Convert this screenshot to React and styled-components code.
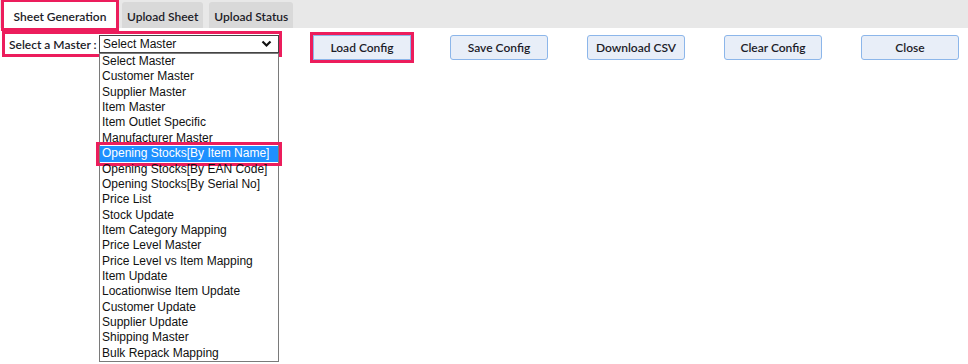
import React from 'react'
import styled, { createGlobalStyle } from 'styled-components';

const Global = createGlobalStyle`
  body {
    margin: 0;
    background: #fff;
    font-family: Lato, "Open Sans", sans-serif;
  }
`;

const MASTERS = [
  'Select Master',
  'Customer Master',
  'Supplier Master',
  'Item Master',
  'Item Outlet Specific',
  'Manufacturer Master',
  'Opening Stocks[By Item Name]',
  'Opening Stocks[By EAN Code]',
  'Opening Stocks[By Serial No]',
  'Price List',
  'Stock Update',
  'Item Category Mapping',
  'Price Level Master',
  'Price Level vs Item Mapping',
  'Item Update',
  'Locationwise Item Update',
  'Customer Update',
  'Supplier Update',
  'Shipping Master',
  'Bulk Repack Mapping',
];

const BUTTONS = ['Load Config', 'Save Config', 'Download CSV', 'Clear Config', 'Close'];

function App() {
  return (
    <Page>
      <Global />
      <TabBar>
        <Tab active highlight>Sheet Generation</Tab>
        <Tab>Upload Sheet</Tab>
        <Tab>Upload Status</Tab>
      </TabBar>

      <Toolbar>
        <MasterGroup>
          <Label>Select a Master :</Label>
          <Select>
            <SelectText>Select Master</SelectText>
            <svg width="11" height="8" viewBox="0 0 11 8">
              <polyline points="1.5,1.5 5.5,5.5 9.5,1.5" fill="none" stroke="#111" strokeWidth="2.2" />
            </svg>
            <List>
              {MASTERS.map((m, i) => (
                <Option key={m} selected={i === 6}>{m}</Option>
              ))}
            </List>
          </Select>
        </MasterGroup>

        <Buttons>
          {BUTTONS.map((b, i) => (
            <Button key={b} highlight={i === 0}>{b}</Button>
          ))}
        </Buttons>
      </Toolbar>
    </Page>
  )
}

const Page = styled.div`
    width:968px;
    height:364px;
    overflow:hidden;
`;

const TabBar = styled.div`
    display:flex;
    align-items:flex-end;
    gap:6px;
    height:28px;
    padding-left:4px;
    background:#e8e8e8;
`;

const Tab = styled.div`
    display:flex;
    align-items:center;
    justify-content:center;
    height:26px;
    padding:3px 5px 0;
    box-sizing:border-box;
    border-radius:${p => p.highlight ? '0' : '3px 3px 0 0'};
    background:${p => p.active ? '#fff' : '#d9d9d9'};
    color:#1c1c28;
    font-size:12px;
    font-weight:600;
    outline:${p => p.highlight ? '3px solid #ec1d5c' : 'none'};
    outline-offset:0;
    ${p => p.active && 'width:112px; padding:3px 0 0;'}
`;

const Toolbar = styled.div`
    display:flex;
    align-items:flex-start;
    padding:3px 0 0 2px;
`;

const MasterGroup = styled.div`
    display:flex;
    align-items:center;
    width:280px;
    height:26px;
    box-sizing:border-box;
    border:3px solid #ec1d5c;
    padding:1px 0 0 4px;
`;

const Label = styled.span`
    font-size:12px;
    font-weight:600;
    color:#1c1c28;
`;

const Select = styled.div`
    position:relative;
    display:flex;
    align-items:center;
    justify-content:space-between;
    width:180px;
    height:18px;
    margin-left:auto;
    margin-top:-1px;
    box-sizing:border-box;
    border:1px solid #444;
    background:#fff;
    padding:0 6px 0 3px;

    svg{
        flex:none;
    }
`;

const SelectText = styled.span`
    font-family:"Liberation Sans", Arial, sans-serif;
    font-size:12px;
    color:#111;
`;

const List = styled.div`
    position:absolute;
    top:17px;
    left:-1px;
    width:180px;
    box-sizing:border-box;
    border:1px solid #7a7a7a;
    background:#fff;
    z-index:1;
`;

const Option = styled.div`
    height:15.37px;
    line-height:15.37px;
    padding-left:2px;
    font-family:"Liberation Sans", Arial, sans-serif;
    font-size:12px;
    white-space:nowrap;
    color:${p => p.selected ? '#fff' : '#111'};
    background:${p => p.selected ? '#1e90ff' : 'transparent'};
    outline:${p => p.selected ? '3px solid #ec1d5c' : 'none'};
    outline-offset:1px;
    position:relative;
`;

const Buttons = styled.div`
    display:flex;
    gap:39px;
    margin-left:31px;
    margin-top:4px;
`;

const Button = styled.button`
    width:98px;
    height:25px;
    box-sizing:border-box;
    border:1px solid #8cb6ea;
    border-radius:${p => p.highlight ? '0' : '3px'};
    background:#e8eef8;
    color:#1c1c28;
    font-family:Lato, sans-serif;
    font-size:12px;
    font-weight:600;
    padding:0;
    outline:${p => p.highlight ? '3px solid #ec1d5c' : 'none'};
    outline-offset:0;
`;

export default App
